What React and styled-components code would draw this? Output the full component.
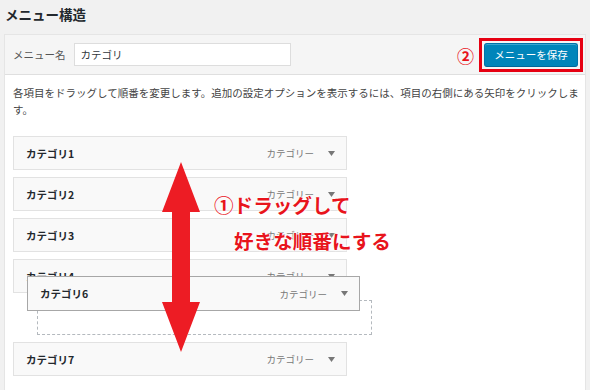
import React from "react";
import styled, { createGlobalStyle } from "styled-components";

const GlobalStyle = createGlobalStyle`
  body {
    margin: 0;
    background: #f1f1f1;
    font-family: "Noto Sans CJK JP", "Noto Sans", sans-serif;
    color: #23282d;
  }
`;

const items = ["カテゴリ1", "カテゴリ2", "カテゴリ3", "カテゴリ4"];

const App = () => {
  return (
    <Page>
      <GlobalStyle />
      <Title>メニュー構造</Title>
      <Panel>
        <Header>
          <Label>メニュー名</Label>
          <NameInput defaultValue="カテゴリ" />
          <Spacer />
          <StepMark>②</StepMark>
          <Highlight>
            <SaveButton>メニューを保存</SaveButton>
          </Highlight>
        </Header>
        <Body>
          <Description>
            各項目をドラッグして順番を変更します。追加の設定オプションを表示するには、項目の右側にある矢印をクリックします。
          </Description>
          <MenuList>
            {items.map((name) => (
              <MenuItem key={name} name={name} />
            ))}
            <Placeholder />
            <MenuItem name="カテゴリ7" />
            <MenuItem name="カテゴリ6" dragging />
          </MenuList>
        </Body>
      </Panel>

      <ArrowSvg width="44" height="196" viewBox="0 0 44 196">
        <path
          d="M21 0 L40 50 L30 50 L30 140 L40 140 L21 190 L2 140 L12 140 L12 50 L2 50 Z"
          fill="#ed1c24"
        />
      </ArrowSvg>
      <Callout $left={214} $top={194}>①ドラッグして</Callout>
      <Callout $left={234} $top={230}>好きな順番にする</Callout>
    </Page>
  );
};

const MenuItem = ({ name, dragging }) => (
  <ItemBar $dragging={dragging}>
    <ItemTitle>{name}</ItemTitle>
    <ItemType>カテゴリー</ItemType>
    <Caret viewBox="0 0 7 5" width="7" height="5">
      <path d="M0 0 L7 0 L3.5 5 Z" fill="#777" />
    </Caret>
  </ItemBar>
);

export default App;

const Page = styled.div`
  position: relative;
  width: 590px;
  height: 390px;
  overflow: hidden;
`;

const Title = styled.h2`
  margin: 0;
  padding: 4px 5px 0;
  height: 30px;
  font-size: 13.5px;
  line-height: 20px;
  font-weight: 700;
  color: #23282d;
`;

const Panel = styled.div`
  margin-left: 4px;
  width: 582px;
  height: 400px;
  box-sizing: border-box;
  border: 1px solid #e5e5e5;
  background: #fff;
`;

const Header = styled.div`
  display: flex;
  align-items: center;
  height: 40px;
  box-sizing: border-box;
  padding: 0 2px 0 8px;
  background: #f5f5f5;
  border-bottom: 1px solid #dfdfdf;
`;

const Label = styled.span`
  font-size: 10.5px;
  color: #555;
  margin-right: 8px;
`;

const NameInput = styled.input`
  width: 217px;
  height: 23px;
  box-sizing: border-box;
  border: 1px solid #ddd;
  background: #fff;
  padding: 0 6px;
  font-family: inherit;
  font-size: 10.5px;
  color: #32373c;
  outline: none;
`;

const Spacer = styled.div`
  flex: 1;
`;

const StepMark = styled.span`
  font-size: 17px;
  line-height: 17px;
  font-weight: 700;
  color: #e8141c;
  margin-right: 5px;
  margin-top: 2px;
`;

const Highlight = styled.div`
  display: flex;
  padding: 2px;
  border: 3px solid #e60012;
`;

const SaveButton = styled.button`
  width: 94px;
  height: 24px;
  padding: 0;
  border: 1px solid #0073aa;
  border-bottom-color: #006799;
  border-radius: 3px;
  background: #0085ba;
  color: #fff;
  font-family: inherit;
  font-size: 10.5px;
  box-shadow: inset 0 1px 0 rgba(120, 200, 230, 0.5);
`;

const Body = styled.div`
  padding: 9px 8px 0;
`;

const Description = styled.p`
  margin: 0 0 18px;
  width: 572px;
  font-size: 10.5px;
  line-height: 17px;
  color: #444;
`;

const MenuList = styled.div`
  position: relative;
  display: flex;
  flex-direction: column;
  gap: 7px;
`;

const ItemBar = styled.div`
  display: flex;
  align-items: center;
  width: ${(p) => (p.$dragging ? "333px" : "334px")};
  height: 34px;
  box-sizing: border-box;
  padding: 0 11px 0 12px;
  border: 1px solid ${(p) => (p.$dragging ? "#a7a7a7" : "#e2e2e2")};
  background: #f9f9f9;
  ${(p) =>
    p.$dragging &&
    `
    position: absolute;
    left: 14px;
    top: 140px;
    height: 35px;
  `}
`;

const ItemTitle = styled.span`
  flex: 1;
  font-size: 10.5px;
  font-weight: 700;
  color: #23282d;
`;

const ItemType = styled.span`
  font-size: 9.5px;
  color: #777;
  margin-right: 14px;
`;

const Caret = styled.svg`
  display: block;
`;

const Placeholder = styled.div`
  margin-left: 24px;
  width: 335px;
  height: 35px;
  box-sizing: border-box;
  border: 1px dashed #b4b9be;
`;

const ArrowSvg = styled.svg`
  position: absolute;
  left: 160px;
  top: 162px;
`;

const Callout = styled.div`
  position: absolute;
  left: ${(p) => p.$left}px;
  top: ${(p) => p.$top}px;
  font-size: 19.6px;
  line-height: 22px;
  font-weight: 700;
  color: #e8141c;
  white-space: nowrap;
  text-shadow: 0 0 2px #fff, 0 0 2px #fff, 0 0 3px #fff;
`;
